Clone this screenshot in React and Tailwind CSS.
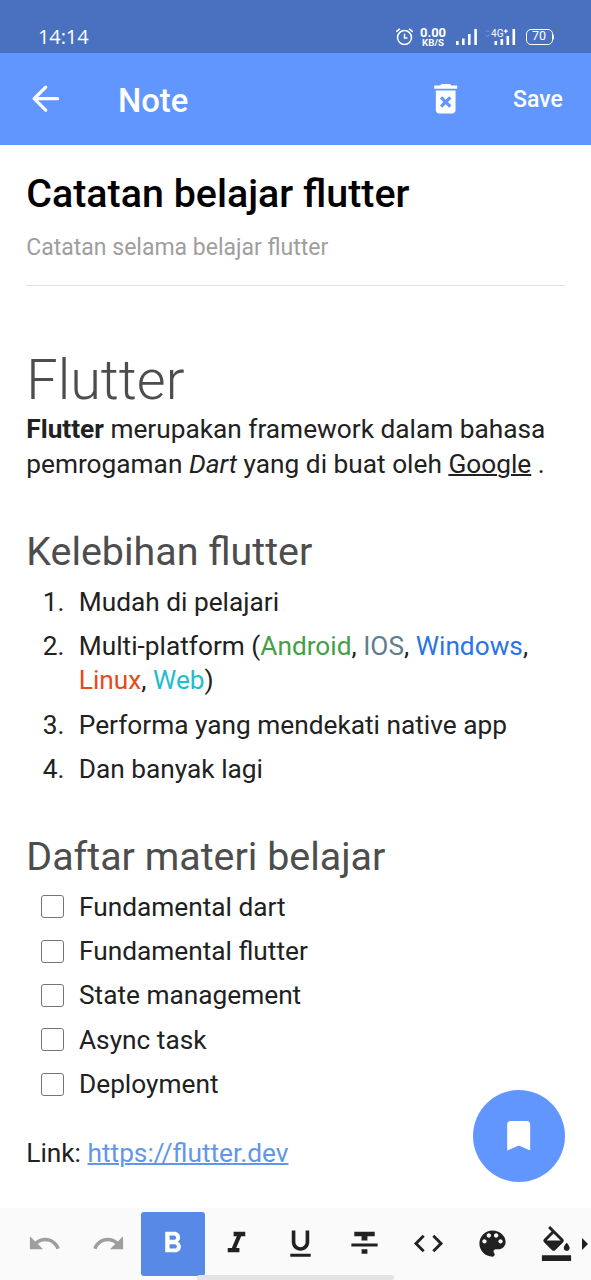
import React from "react";

function Icon({ d, className = "size-[35px]" }) {
  return (
    <svg viewBox="0 0 24 24" fill="currentColor" className={`shrink-0 ${className}`}>
      <path d={d} />
    </svg>
  );
}

const icons = {
  trash:
    "M6 19c0 1.1.9 2 2 2h8c1.1 0 2-.9 2-2V7H6v12zm2.46-7.12l1.41-1.41L12 12.59l2.12-2.12 1.41 1.41L13.41 14l2.12 2.12-1.41 1.41L12 15.41l-2.12 2.12-1.41-1.41L10.59 14l-2.13-2.12zM15.5 4l-1-1h-5l-1 1H5v2h14V4z",
  bookmark: "M17 3H7c-1.1 0-2 .9-2 2v16l7-3 7 3V5c0-1.1-.9-2-2-2z",
  undo: "M12.5 8c-2.65 0-5.05.99-6.9 2.6L2 7v9h9l-3.62-3.62c1.39-1.16 3.16-1.88 5.12-1.88 3.54 0 6.55 2.31 7.6 5.5l2.37-.78C21.08 11.03 17.15 8 12.5 8z",
  redo: "M18.4 10.6C16.55 8.99 14.15 8 11.5 8c-4.65 0-8.58 3.03-9.96 7.22L3.9 16c1.05-3.19 4.05-5.5 7.6-5.5 1.95 0 3.73.72 5.12 1.88L13 16h9V7l-3.6 3.6z",
  bold: "M15.6 10.79c.97-.67 1.65-1.77 1.65-2.79 0-2.26-1.75-4-4-4H7v14h7.04c2.09 0 3.71-1.7 3.71-3.79 0-1.52-.86-2.82-2.15-3.42zM10 6.5h3c.83 0 1.5.67 1.5 1.5s-.67 1.5-1.5 1.5h-3v-3zm3.5 9H10v-3h3.5c.83 0 1.5.67 1.5 1.5s-.67 1.5-1.5 1.5z",
  italic: "M10 4v3h2.21l-3.42 8H6v3h8v-3h-2.21l3.42-8H18V4z",
  underline:
    "M12 17c3.31 0 6-2.69 6-6V3h-2.5v8c0 1.93-1.57 3.5-3.5 3.5S8.5 12.93 8.5 11V3H6v8c0 3.31 2.69 6 6 6zm-7 2v2h14v-2H5z",
  strike: "M10 19h4v-3h-4v3zM5 4v3h5v3h4V7h5V4H5zM3 14h18v-2H3v2z",
  code: "M9.4 16.6L4.8 12l4.6-4.6L8 6l-6 6 6 6 1.4-1.4zm5.2 0l4.6-4.6-4.6-4.6L16 6l6 6-6 6-1.4-1.4z",
  palette:
    "M12 3c-4.97 0-9 4.03-9 9s4.03 9 9 9c.83 0 1.5-.67 1.5-1.5 0-.39-.15-.74-.39-1.01-.23-.26-.38-.61-.38-.99 0-.83.67-1.5 1.5-1.5H16c2.76 0 5-2.24 5-5 0-4.42-4.03-8-9-8zm-5.5 9c-.83 0-1.5-.67-1.5-1.5S5.67 9 6.5 9 8 9.67 8 10.5 7.33 12 6.5 12zm3-4C8.67 8 8 7.33 8 6.5S8.67 5 9.5 5s1.5.67 1.5 1.5S10.33 8 9.5 8zm5 0c-.83 0-1.5-.67-1.5-1.5S13.67 5 14.5 5s1.5.67 1.5 1.5S15.33 8 14.5 8zm3 4c-.83 0-1.5-.67-1.5-1.5S16.67 9 17.5 9s1.5.67 1.5 1.5-.67 1.5-1.5 1.5z",
  fill: "M16.56 8.94L7.62 0 6.21 1.41l2.38 2.38-5.15 5.15a1.49 1.49 0 000 2.12l5.5 5.5c.29.29.68.44 1.06.44s.77-.15 1.06-.44l5.5-5.5c.59-.58.59-1.53 0-2.12zM5.21 10L10 5.21 14.79 10H5.21zM19 11.5s-2 2.17-2 3.5c0 1.1.9 2 2 2s2-.9 2-2c0-1.33-2-3.5-2-3.5zM2 20h20v4H2v-4z",
};

function StatusBar() {
  return (
    <div className="flex h-[52.5px] items-end bg-[#4a71c0] pr-[38.5px] pb-[5px] pl-[38px] text-white">
      <span className="font-['Open_Sans'] text-[20px] leading-[23px] tracking-[-0.1px]">14:14</span>
      <div className="ml-auto flex h-[22px] items-center">
        <svg viewBox="0 0 18 18" className="size-[18px]" fill="none" stroke="currentColor" strokeWidth="1.5" strokeLinecap="round">
          <circle cx="8.500" cy="9.6" r="7" />
          <path d="M8.500 6.3V10h2.4M.7 3.4L3.500 1.2M16.300 3.4L13.500 1.2" />
        </svg>
        <div className="ml-[6px] flex w-[27px] flex-col items-center font-bold">
          <span className="text-[13px] leading-[11px]">0.00</span>
          <span className="text-[9.7px] leading-[9px]">KB/S</span>
        </div>
        <svg viewBox="0 0 22 18" className="ml-[9px] h-[18px] w-[22px]" fill="currentColor">
          <path d="M0 13h2.6v4H0zM6 10.500h2.600V17H6zM12 6h2.600v11H12zM18.300 1h2.600v16h-2.600z" />
        </svg>
        <svg viewBox="0 0 31 18" className="ml-[7.5px] h-[18px] w-[31px] overflow-visible" fill="currentColor">
          <path d="M9.500 13h2.600v4H9.500zM15.500 11h2.600v6h-2.600zM21.500 8h2.600v9h-2.600zM27.500 1h2.600v16h-2.600z" />
          <path d="M.8 4L2.500 2.200 4.200 4M.8 7l1.700 1.800L4.200 7" fill="none" stroke="#7d9ce0" strokeWidth="1" />
          <text x="6" y="8.5" fontFamily="Roboto" fontSize="11.500" textLength="12.500" lengthAdjust="spacingAndGlyphs">4G</text>
          <path d="M18.800 3.200h4M20.800 1.200v4" stroke="currentColor" strokeWidth="1.200" />
        </svg>
        <div className="relative ml-[9.5px] flex h-4 w-[27px] items-center justify-center rounded-[5px] border-[1.5px] border-white text-[12.5px] leading-none">
          70
          <span className="absolute top-[4px] -right-[2.5px] h-[6px] w-[2px] rounded-r bg-white" />
        </div>
      </div>
    </div>
  );
}

function AppBar() {
  return (
    <header className="flex h-[92px] items-center bg-[#6296ff] text-white">
      <svg viewBox="0 0 24 24" className="mt-px ml-[26px] size-[39.4px]" fill="none" stroke="currentColor" strokeWidth="2" strokeLinecap="round" strokeLinejoin="round">
        <path d="M19.200 12H5M12 5l-7 7 7 7" />
      </svg>
      <h1 className="ml-[52.5px] pt-[6px] text-[32.800px] font-medium">Note</h1>
      <Icon d={icons.trash} className="mt-px mr-[1.5px] ml-auto size-[39.4px]" />
      <span className="mr-[28px] ml-[46px] w-[50px] pt-[3px] text-[23px] font-medium whitespace-nowrap">Save</span>
    </header>
  );
}

function Numbered({ n, children }) {
  return (
    <li className="mb-[10.1px] flex">
      <span className="w-[52.5px] pl-[16.5px]">{n}.</span>
      <span className="flex-1 whitespace-nowrap">{children}</span>
    </li>
  );
}

function Tool({ icon, active, muted }) {
  return (
    <button
      className={`flex size-16 shrink-0 items-center justify-center rounded-[3px] pr-[1.5px] pb-[2px] ${
        active ? "bg-[#5789e7] text-white" : muted ? "text-[#9e9e9e]" : "text-[#212121]"
      }`}
    >
      <Icon d={icons[icon]} />
    </button>
  );
}

const tasks = ["Fundamental dart", "Fundamental flutter", "State management", "Async task", "Deployment"];

export default function App() {
  return (
    <div className="relative flex h-[1280px] w-[591px] flex-col overflow-hidden bg-white font-['Roboto',sans-serif] text-[#212121]">
      <StatusBar />
      <AppBar />
      <main className="flex-1 px-[26.3px] pt-[26.5px] text-[26.25px] leading-[34.3px]">
        <div className="h-[63px] text-[39.4px] leading-[46px] font-medium whitespace-nowrap text-black">Catatan belajar flutter</div>
        <div className="h-[50.5px] text-[23px] leading-[27px] text-[#9e9e9e]">Catatan selama belajar flutter</div>
        <hr className="h-[1.6px] border-0 bg-[#e0e0e0]" />
        <h2 className="mt-[61.900px] text-[55.8px] leading-[64px] font-light text-[#4d4d4d]">Flutter</h2>
        <p className="h-[117.1px] leading-[34.8px] whitespace-nowrap">
          <b>Flutter</b> merupakan framework dalam bahasa
          <br />
          pemrogaman <i>Dart</i> yang di buat oleh <u className="decoration-[1.5px]">Google</u> .
        </p>
        <h3 className="h-[55.5px] text-[39.4px] leading-[46px] text-[#4d4d4d]">Kelebihan flutter</h3>
        <ol>
          <Numbered n="1">Mudah di pelajari</Numbered>
          <Numbered n="2">
            Multi-platform (<span className="text-[#43a047]">Android</span>, <span className="text-[#607d8b]">IOS</span>,{" "}
            <span className="text-[#2a75e6]">Windows</span>,
            <br />
            <span className="text-[#e64a19]">Linux</span>, <span className="text-[#26bcd0]">Web</span>)
          </Numbered>
          <Numbered n="3">Performa yang mendekati native app</Numbered>
          <Numbered n="4">Dan banyak lagi</Numbered>
        </ol>
        <h3 className="mt-[47.4px] h-[56px] text-[39.4px] leading-[46px] text-[#4d4d4d]">Daftar materi belajar</h3>
        <ul>
          {tasks.map((t) => (
            <li key={t} className="mb-[10px] flex items-center">
              <span className="mr-[15px] ml-[14.700px] size-[23px] rounded-[3px] border-[1.6px] border-[#757575]" />
              {t}
            </li>
          ))}
        </ul>
        <p className="mt-[34.5px]">
          Link: <a className="text-[#6296e8] underline decoration-[1.5px]">https://flutter.dev</a>
        </p>
      </main>
      <button className="absolute top-[1089.5px] left-[472.5px] flex size-[92px] items-center justify-center rounded-full bg-[#6296ff] text-white">
        <Icon d={icons.bookmark} className="size-[39.4px]" />
      </button>
      <footer className="relative flex h-[72px] shrink-0 items-center bg-[#fafafa] pl-[13px]">
        <Tool icon="undo" muted />
        <Tool icon="redo" muted />
        <Tool icon="bold" active />
        <Tool icon="italic" />
        <Tool icon="underline" />
        <Tool icon="strike" />
        <Tool icon="code" />
        <Tool icon="palette" />
        <Tool icon="fill" />
        <svg viewBox="0 0 6 12" className="absolute top-[30px] left-[582px] h-[12px] w-[6px]" fill="#212121">
          <path d="M0 0l6 6-6 6z" />
        </svg>
        <span className="absolute bottom-0 left-[197px] h-[5px] w-[197px] rounded-full bg-[#e3e3e3]" />
      </footer>
    </div>
  );
}
